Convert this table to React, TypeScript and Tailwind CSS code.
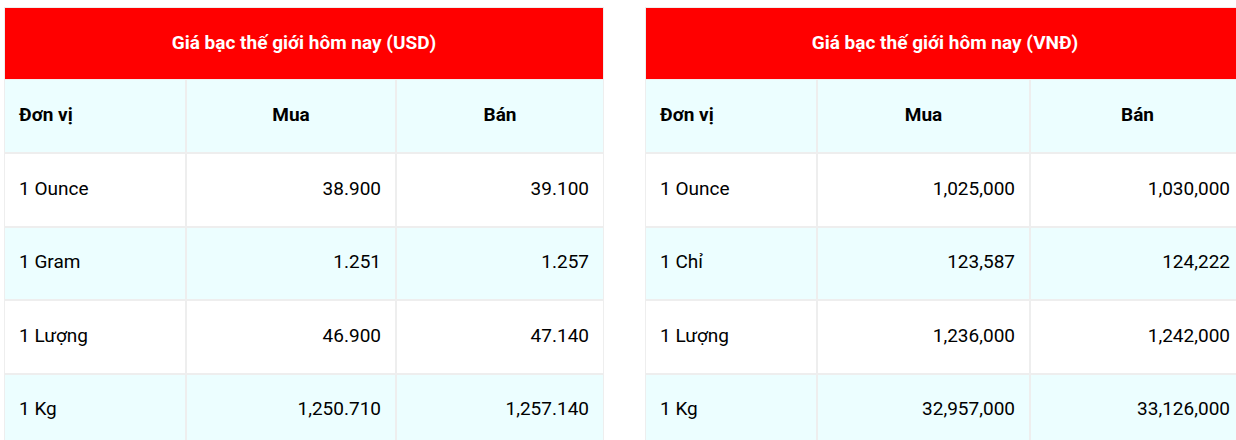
const USD_ROWS = [
  { unit: '1 Ounce', buy: '38.900', sell: '39.100' },
  { unit: '1 Gram', buy: '1.251', sell: '1.257' },
  { unit: '1 Lượng', buy: '46.900', sell: '47.140' },
  { unit: '1 Kg', buy: '1,250.710', sell: '1,257.140' },
]

const VND_ROWS = [
  { unit: '1 Ounce', buy: '1,025,000', sell: '1,030,000' },
  { unit: '1 Chỉ', buy: '123,587', sell: '124,222' },
  { unit: '1 Lượng', buy: '1,236,000', sell: '1,242,000' },
  { unit: '1 Kg', buy: '32,957,000', sell: '33,126,000' },
]

type Row = { unit: string; buy: string; sell: string }

function PriceTable({ title, rows, cols }: { title: string; rows: Row[]; cols: string }) {
  return (
    <div className="w-[600px] shrink-0 border border-[#eeeeee] bg-[#eeeeee] flex flex-col">
      <div className="h-[71px] bg-[#ff0000] text-white font-bold text-[19px] flex items-center justify-center">
        {title}
      </div>
      <div className={`grid ${cols} gap-x-[2px] gap-y-[2px] mt-[1px]`}>
        <div className="h-[72px] pb-[2px] bg-[#ecfeff] px-[14px] flex items-center font-bold">Đơn vị</div>
        <div className="h-[72px] pb-[2px] bg-[#ecfeff] px-[14px] flex items-center justify-center font-bold">Mua</div>
        <div className="h-[72px] pb-[2px] bg-[#ecfeff] px-[14px] flex items-center justify-center font-bold">Bán</div>
        {rows.map((r, i) => {
          const bg = i % 2 === 1 ? 'bg-[#ecfeff]' : 'bg-white'
          return [
            <div key={`u${i}`} className={`h-[71.5px] pb-[2px] ${bg} px-[14px] flex items-center`}>{r.unit}</div>,
            <div key={`b${i}`} className={`h-[71.5px] pb-[2px] ${bg} px-[14px] flex items-center justify-end`}>{r.buy}</div>,
            <div key={`s${i}`} className={`h-[71.5px] pb-[2px] ${bg} px-[14px] flex items-center justify-end`}>{r.sell}</div>,
          ]
        })}
      </div>
    </div>
  )
}

export default function App() {
  return (
    <div className="w-[1236px] h-[440px] overflow-hidden bg-white">
      <div className="flex gap-[41px] pl-[4px] pt-[7px] w-[1300px] text-black text-[19px] font-['Roboto',sans-serif]">
        <PriceTable title="Giá bạc thế giới hôm nay (USD)" rows={USD_ROWS} cols="grid-cols-[180px_208px_206px]" />
        <PriceTable title="Giá bạc thế giới hôm nay (VNĐ)" rows={VND_ROWS} cols="grid-cols-[170px_211px_213px]" />
      </div>
    </div>
  )
}
